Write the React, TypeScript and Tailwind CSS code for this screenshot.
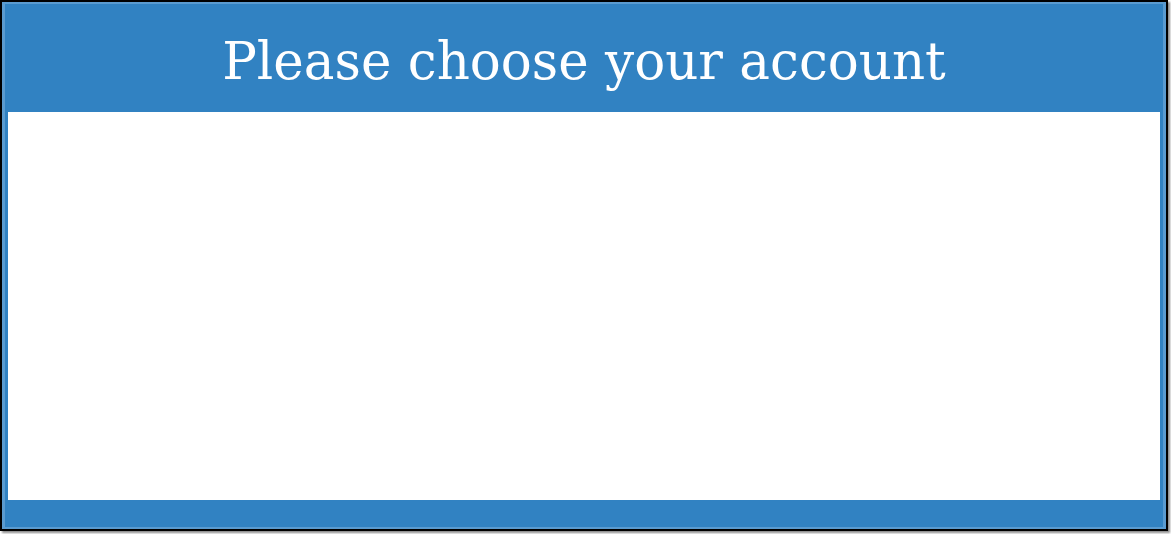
export default function App() {
  return (
    <div className="h-[534px] w-[1171px] bg-white">
      <div className="flex h-[531px] w-[1168px] flex-col border-2 border-black bg-[#3182c2] shadow-[2px_2px_2px_rgba(0,0,0,0.45)]">
        <div className="flex h-full flex-col border-x-[3px] border-t-[2px] border-b-[2px] border-[#5a9bd0]">
          <header className="flex h-[108px] shrink-0 items-center justify-center">
            <h1 className="pt-[8px] font-['DejaVu_Serif',Georgia,serif] text-[51.5px] leading-none text-white">
              Please choose your account
            </h1>
          </header>
          <main className="mx-[3px] h-[388px] shrink-0 bg-white" />
          <footer className="flex-1" />
        </div>
      </div>
    </div>
  );
}
